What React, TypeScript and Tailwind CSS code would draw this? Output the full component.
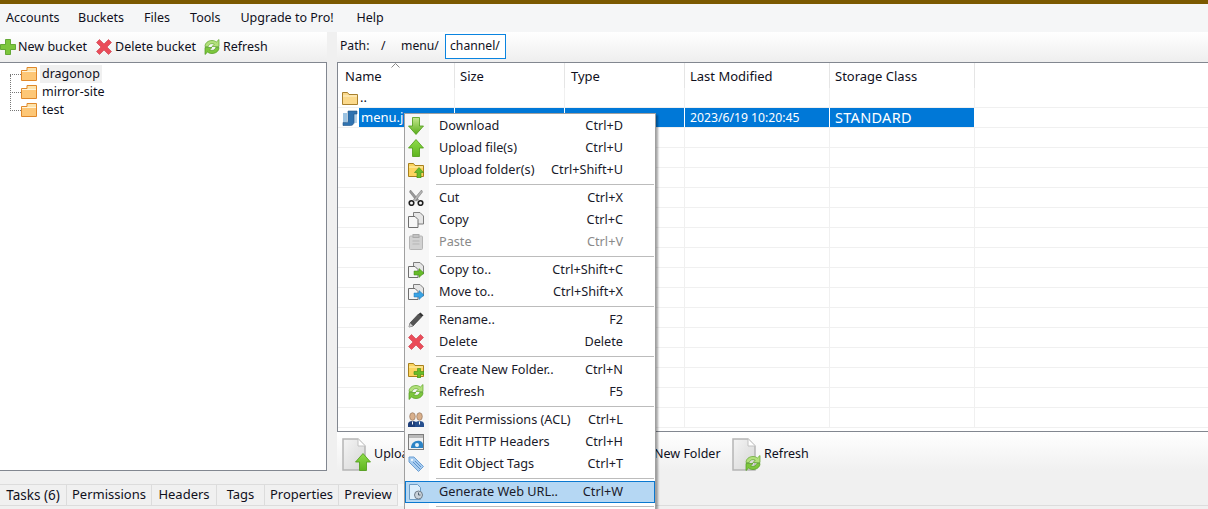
import type { ReactNode } from "react";

const MENU = [
  { label: "Accounts", w: "w-[52px]" },
  { label: "Buckets", w: "" },
  { label: "Files", w: "" },
  { label: "Tools", w: "" },
  { label: "Upgrade to Pro!", w: "w-[96px]" },
  { label: "Help", w: "" },
];
const TABS = [
  { label: "Tasks (6)", w: "w-[67px] text-[13.500px]" },
  { label: "Permissions", w: "w-[85px]" },
  { label: "Headers", w: "w-[65px]" },
  { label: "Tags", w: "w-[48px]" },
  { label: "Properties", w: "w-[74px]" },
  { label: "Preview", w: "w-[59px]" },
];

function Folder() {
  return (
    <svg width="16" height="16" viewBox="0 0 16 16" className="shrink-0">
      <path d="M.5 14.500V4.500h5.500V1.500h9.500v13z" fill="#fde3ab" stroke="#e0882a" />
      <rect x="1" y="6" width="14" height="8" fill="#fdc777" />
      <path d="M1 5.500h14" stroke="#fff3d8" />
    </svg>
  );
}

function UpFolder() {
  return (
    <svg width="16" height="16" viewBox="0 0 16 16" className="shrink-0">
      <path d="M.5 14.500V2.500h5l1.500 2h8.500v10z" fill="#fbd98b" stroke="#a8802e" />
      <path d="M1 6h14" stroke="#fff4d2" />
    </svg>
  );
}

function Arrow({ up = false }: { up?: boolean }) {
  const id = up ? "arrow-up" : "arrow-down";
  return (
    <svg width="16" height="18" viewBox="0 0 16 18" className="shrink-0">
      <defs>
        <linearGradient id={id} x1="0" y1="0" x2="0" y2="1">
          <stop offset="0" stopColor={up ? "#8fdc4a" : "#c6e88f"} />
          <stop offset="1" stopColor={up ? "#5fb51f" : "#58ad18"} />
        </linearGradient>
      </defs>
      <path
        d={up ? "M8 .5L15.500 9H11.500V17.500H4.500V9H.5z" : "M8 17.500L15.500 9H11.500V.5H4.500V9H.5z"}
        fill={`url(#${id})`}
        stroke="#4c9a14"
        strokeWidth=".8"
      />
    </svg>
  );
}

function FolderBadge({ plus = false }: { plus?: boolean }) {
  return (
    <svg width="16" height="16" viewBox="0 0 16 16" className="shrink-0">
      <path d="M.5 14.500V1.500h5l1.500 2h8.500v11z" fill="#fcd45f" stroke="#a8801d" />
      <path d="M1 5h14" stroke="#fff2b8" />
      {plus ? (
        <path d="M9.500 6.500h3v3H16v3h-3.500V16h-3v-3.500H6v-3h3.500z" fill="#67bb2a" stroke="#3f8b14" strokeWidth=".6" />
      ) : (
        <path d="M11 5.500L15.500 10.500H13V16H9V10.500H6.500z" fill="#67bb2a" stroke="#3f8b14" strokeWidth=".6" />
      )}
    </svg>
  );
}

function Scissors() {
  return (
    <svg width="16" height="16" viewBox="0 0 16 16" className="shrink-0">
      <path d="M2.500 0L10.500 9.500 8.500 11 1.500 2z" fill="#9a9a9a" stroke="#6c6c6c" strokeWidth=".5" />
      <path d="M13.500 0L5.500 9.500 7.500 11 14.500 2z" fill="#b5b5b5" stroke="#6c6c6c" strokeWidth=".5" />
      <circle cx="3.500" cy="13" r="2.300" fill="none" stroke="#1d1d1d" strokeWidth="1.600" />
      <circle cx="12.500" cy="13" r="2.300" fill="none" stroke="#1d1d1d" strokeWidth="1.600" />
    </svg>
  );
}

function Pages({ tail }: { tail?: ReactNode }) {
  return (
    <svg width="16" height="16" viewBox="0 0 16 16" className="shrink-0">
      <path d="M5.500 .5h6.500l3.500 3.500v8h-10z" fill="#e6e6e6" stroke="#7f7f7f" />
      <path d="M.5 4.500h6.500l3 3v8h-9.500z" fill="#f6f6f6" stroke="#6f6f6f" />
      {tail}
    </svg>
  );
}

function Paste() {
  return (
    <svg width="14" height="16" viewBox="0 0 14 16" className="shrink-0 ml-px">
      <rect x=".5" y="2" width="13" height="13.500" rx="1" fill="#d2d2d2" stroke="#b5b5b5" />
      <rect x="4" y=".5" width="6" height="3" fill="#c2c2c2" stroke="#aaa" />
      <path d="M3.500 7h7M3.500 10h7" stroke="#b5b5b5" />
    </svg>
  );
}

function Pencil() {
  return (
    <svg width="16" height="16" viewBox="0 0 16 16" className="shrink-0">
      <path d="M1 15l1-4 8.500-9 3 3L5 14z" fill="#555" stroke="#2e2e2e" strokeWidth=".6" />
      <path d="M1 15l1-4 3 3z" fill="#cfcfcf" />
      <path d="M10.500 2l2-1.500 3 3-2 1.500z" fill="#333" />
    </svg>
  );
}

function RedX() {
  return (
    <svg width="16" height="16" viewBox="0 0 16 16" className="shrink-0">
      <path
        d="M3.500 .5L8 5 12.500 .5 15.500 3.500 11 8l4.500 4.500-3 3L8 11l-4.500 4.500-3-3L5 8 .5 3.500z"
        fill="#ea4c59"
        stroke="#c93946"
        strokeWidth=".6"
      />
    </svg>
  );
}

function Plus() {
  return (
    <svg width="16" height="16" viewBox="0 0 16 16" className="shrink-0">
      <path d="M5.500 .5h5v5h5v5h-5v5h-5v-5h-5v-5h5z" fill="#7cc63c" stroke="#4f9a1c" strokeWidth=".8" />
    </svg>
  );
}

function Refresh() {
  const arc = "M1 7.500C1 4 4 1.500 8 1.500c1.800 0 3.200.5 4.300 1.500L15 .5V7.500H8l2.300-2.300C9.600 4.800 8.900 4.600 8 4.600c-2 0-3.300 1.200-3.700 2.900z";
  return (
    <svg width="16" height="16" viewBox="0 0 16 16" className="shrink-0">
      <path d={arc} fill="#b2e07c" stroke="#5fa52a" strokeWidth=".7" />
      <path d={arc} fill="#7cc63c" stroke="#4f9a1c" strokeWidth=".7" transform="rotate(180 8 8)" />
    </svg>
  );
}

function Users() {
  return (
    <svg width="16" height="16" viewBox="0 0 16 16" className="shrink-0">
      <ellipse cx="4.500" cy="4.500" rx="2.800" ry="3.800" fill="#d9b08c" stroke="#8a6a50" strokeWidth=".6" />
      <ellipse cx="11.500" cy="4.500" rx="2.800" ry="3.800" fill="#d9b08c" stroke="#8a6a50" strokeWidth=".6" />
      <path d="M0 15v-3c0-2 2-3 4.500-3S9 10 9 12v3z" fill="#1f3f7a" />
      <path d="M7 15v-3c0-2 2-3 4.500-3S16 10 16 12v3z" fill="#27508f" />
      <path d="M4 9.500h1v3H4zM11 9.500h1v3h-1z" fill="#fff" />
    </svg>
  );
}

function Browser() {
  return (
    <svg width="16" height="16" viewBox="0 0 16 16" className="shrink-0">
      <rect x=".5" y=".5" width="15" height="15" fill="#f0f0f0" stroke="#7d7d7d" />
      <rect x="1" y="1" width="14" height="3" fill="#b9b9b9" />
      <path d="M3 14c0-5 4-8 9-7 2 .5 3 2 3 4v3z" fill="#2c83c5" />
      <circle cx="9" cy="11" r="2" fill="#e7f2fa" />
    </svg>
  );
}

function Tag() {
  return (
    <svg width="16" height="16" viewBox="0 0 16 16" className="shrink-0">
      <path d="M1 1h5l9.500 9.500-5 5L1 6z" fill="#a9cdf0" stroke="#6d9fd2" />
      <circle cx="4" cy="4" r="1" fill="#fff" />
      <path d="M5 6l7 7M7 5l6 6" stroke="#5d91c9" />
    </svg>
  );
}

function WebUrl() {
  return (
    <svg width="16" height="16" viewBox="0 0 16 16" className="shrink-0">
      <path d="M1.500 .5h8l3 3v12h-11z" fill="#dceefb" stroke="#6d9cc4" />
      <circle cx="10.500" cy="11" r="4" fill="#c9d2da" stroke="#6f7d8a" />
      <path d="M10.500 8.500V11h2" stroke="#50606e" fill="none" />
    </svg>
  );
}

function JsFile() {
  return (
    <svg width="16" height="16" viewBox="0 0 16 16" className="shrink-0">
      <path d="M1 3h4v9H1z" fill="#9cc3e2" />
      <path d="M12 4h3v9h-3z" fill="#b4d1e8" />
      <path d="M6 1h9v3h-3v8.500c0 1.500-1.500 3-3.500 3H1v-3h3.500c1 0 1.500-.5 1.500-1.500z" fill="#2f72b0" stroke="#1f5488" strokeWidth=".6" />
    </svg>
  );
}

function BigPage({ children }: { children: ReactNode }) {
  return (
    <span className="relative block w-[29px] h-[33px] shrink-0">
      <svg width="24" height="33" viewBox="0 0 24 33" className="block">
        <defs>
          <linearGradient id="page-fill" x1="0" y1="0" x2="1" y2="1">
            <stop offset="0" stopColor="#f4f4f4" />
            <stop offset="1" stopColor="#d6d6d6" />
          </linearGradient>
        </defs>
        <path d="M1 1h15l7 7v24H1z" fill="url(#page-fill)" stroke="#b5b5b5" strokeWidth="1.500" />
        <path d="M16 1v7h7" fill="#fff" stroke="#c2c2c2" />
      </svg>
      <span className="absolute right-0 bottom-0 block">{children}</span>
    </span>
  );
}

type MenuRow = {
  label: string;
  keys: string;
  icon: ReactNode;
  disabled?: boolean;
  active?: boolean;
};

const GROUPS: MenuRow[][] = [
  [
    { label: "Download", keys: "Ctrl+D", icon: <Arrow /> },
    { label: "Upload file(s)", keys: "Ctrl+U", icon: <Arrow up /> },
    { label: "Upload folder(s)", keys: "Ctrl+Shift+U", icon: <FolderBadge /> },
  ],
  [
    { label: "Cut", keys: "Ctrl+X", icon: <Scissors /> },
    { label: "Copy", keys: "Ctrl+C", icon: <Pages /> },
    { label: "Paste", keys: "Ctrl+V", icon: <Paste />, disabled: true },
  ],
  [
    {
      label: "Copy to..",
      keys: "Ctrl+Shift+C",
      icon: <Pages tail={<path d="M6 9h5V6.500L16 11l-5 4.500V13H6z" fill="#67bb2a" stroke="#3f8b14" strokeWidth=".5" />} />,
    },
    {
      label: "Move to..",
      keys: "Ctrl+Shift+X",
      icon: <Pages tail={<path d="M6 9h5V6.500L16 11l-5 4.500V13H6z" fill="#3aa3e3" stroke="#1d76b4" strokeWidth=".5" />} />,
    },
  ],
  [
    { label: "Rename..", keys: "F2", icon: <Pencil /> },
    { label: "Delete", keys: "Delete", icon: <RedX /> },
  ],
  [
    { label: "Create New Folder..", keys: "Ctrl+N", icon: <FolderBadge plus /> },
    { label: "Refresh", keys: "F5", icon: <Refresh /> },
  ],
  [
    { label: "Edit Permissions (ACL)", keys: "Ctrl+L", icon: <Users /> },
    { label: "Edit HTTP Headers", keys: "Ctrl+H", icon: <Browser /> },
    { label: "Edit Object Tags", keys: "Ctrl+T", icon: <Tag /> },
  ],
  [{ label: "Generate Web URL..", keys: "Ctrl+W", icon: <WebUrl />, active: true }],
];

function ContextMenu() {
  return (
    <div className="absolute left-[404px] top-[113px] w-[252px] h-[400px] bg-white border border-[#a0a0a0] shadow-[2px_2px_2px_rgba(0,0,0,0.35)] text-[#1a1a2a] text-[12.700px]">
      <div className="absolute left-0 top-0 bottom-0 w-[24px] bg-[#f7f7f7]" />
      <div className="relative pt-px">
        {GROUPS.map((group, i) => (
          <div key={i}>
            {group.map((row) => (
              <div
                key={row.label}
                className={`flex items-center h-[22px] ${
                  row.active ? "bg-[#b5d7f3] border border-[#0a78d0] pl-[2px]" : "pl-[3px]"
                } ${row.disabled ? "text-[#8a8a8a]" : ""}`}
              >
                <span className="w-[31px] flex justify-start shrink-0">{row.icon}</span>
                <span className="flex-1 whitespace-nowrap">{row.label}</span>
                <span className={`whitespace-nowrap ${row.active ? "mr-[31px]" : "mr-[32px]"}`}>{row.keys}</span>
              </div>
            ))}
            <div className="h-[6px] flex items-center pl-[31px] pr-px">
              <div className="h-px w-full bg-[#bcbcbc]" />
            </div>
          </div>
        ))}
      </div>
    </div>
  );
}

function TreeRow({ label, active }: { label: string; active?: boolean }) {
  return (
    <div className="flex items-center h-[18px]">
      <span className="w-[11px] border-t border-dotted border-[#777]" />
      <Folder />
      <span className={`ml-[3px] px-[2px] leading-[18px] text-[12.500px] ${active ? "bg-[#f0f0f0]" : ""}`}>{label}</span>
    </div>
  );
}

const COLS = ["w-[117px]", "w-[110px]", "w-[120px]", "w-[145px]", "w-[145px]"];

function FileRow({ children }: { children?: ReactNode }) {
  return (
    <div className="flex h-[20px] border-b border-[#f0f0f0]">
      {COLS.map((w, i) => (
        <div key={w + i} className={`${w} h-full border-r border-[#f0f0f0] flex items-center`}>
          {i === 0 ? children : null}
        </div>
      ))}
    </div>
  );
}

export default function App() {
  return (
    <div
      className="relative h-[509px] w-[1208px] overflow-hidden bg-[#f0f0f0] text-[12.500px] text-[#10101c] flex flex-col"
      style={{ fontFamily: '"Noto Sans", "Open Sans", sans-serif' }}
    >
      <div className="h-[4px] bg-[#7b5900] shrink-0" />

      {/* Menu bar */}
      <div className="h-[28px] shrink-0 bg-[#f5f6f7] flex items-center pl-[6px] gap-[20px]">
        {MENU.map((m) => (
          <span key={m.label} className={`${m.w} whitespace-nowrap`}>
            {m.label}
          </span>
        ))}
      </div>

      {/* Panels */}
      <div className="flex h-[439px] shrink-0 gap-[10px]">
        <div className="w-[327px] flex flex-col shrink-0">
          <div className="h-[30px] shrink-0 bg-gradient-to-b from-white to-[#eeeeee] flex items-center">
            <Plus />
            <span className="ml-[2px]">New bucket</span>
            <span className="ml-[9px]"><RedX /></span>
            <span className="ml-[3px]">Delete bucket</span>
            <span className="ml-[8px]"><Refresh /></span>
            <span className="ml-[3px]">Refresh</span>
          </div>
          <div className="h-[409px] bg-white border border-l-0 border-[#828790] pt-[2px] relative">
            <div className="ml-[10px] border-l border-dotted border-[#777] absolute top-[12px] h-[36px]" />
            <div className="ml-[10px]">
              <TreeRow label="dragonop" active />
              <TreeRow label="mirror-site" />
              <TreeRow label="test" />
            </div>
          </div>
        </div>

        <div className="flex-1 flex flex-col min-w-0">
          <div className="h-[30px] shrink-0 bg-gradient-to-b from-white to-[#eeeeee] flex items-start pt-[2px] pl-[3px] text-[12.200px]">
            <span className="w-[29px] h-[25px] flex items-center">Path:</span>
            <span className="w-[16px] h-[25px] ml-[12px] flex items-center">/</span>
            <span className="w-[37px] h-[25px] ml-[4px] flex items-center">menu/</span>
            <span className="ml-[7px] h-[25px] w-[61px] pl-[4px] flex items-center border border-[#0a84e0] bg-white">channel/</span>
          </div>

          {/* File table */}
          <div className="h-[370px] shrink-0 bg-white border-y border-l border-[#828790] overflow-hidden text-[13px]">
            <div className="flex h-[25px]">
              {["Name", "Size", "Type", "Last Modified", "Storage Class"].map((h, i) => (
                <div
                  key={h}
                  className={`${COLS[i]} relative h-full border-r border-[#e5e5e5] pt-[2px] flex items-center ${
                    i === 0 ? "pl-[7px]" : i === 2 ? "pl-[6px]" : "pl-[5px]"
                  }`}
                >
                  {h}
                  {i === 0 && (
                    <svg width="9" height="5" viewBox="0 0 9 5" className="absolute left-[53px] top-0">
                      <path d="M.5 4.500l4-4 4 4" fill="none" stroke="#888" />
                    </svg>
                  )}
                </div>
              ))}
            </div>
            <FileRow>
              <span className="pl-[4px] flex items-center gap-[2px]">
                <UpFolder />
                ..
              </span>
            </FileRow>
            <div className="flex h-[20px] border-b border-[#f0f0f0]">
              <div className="w-[117px] flex items-center pl-[4px] border-r border-white">
                <JsFile />
                <span className="ml-px h-full flex-1 bg-[#0078d7] text-white pl-[2px] pt-px flex items-center">menu.js</span>
              </div>
              <div className={`${COLS[1]} bg-[#0078d7] border-r border-white`} />
              <div className={`${COLS[2]} bg-[#0078d7] border-r border-white`} />
              <div className={`${COLS[3]} bg-[#0078d7] text-white border-r border-white pl-[5px] pt-px flex items-center text-[12.200px]`}>
                2023/6/19 10:20:45
              </div>
              <div className={`${COLS[4]} bg-[#0078d7] text-white border-r border-white pl-[5px] pt-px flex items-center text-[14.500px] tracking-[0.3px]`}>
                STANDARD
              </div>
            </div>
            {Array.from({ length: 15 }, (_, i) => (
              <FileRow key={i} />
            ))}
          </div>

          {/* Bottom toolbar */}
          <div className="h-[39px] shrink-0 bg-gradient-to-b from-white to-[#f0f0f0] flex items-start pt-[6px] pl-[5px]">
            <BigPage><Arrow up /></BigPage>
            <span className="w-[280px] ml-[3px] mt-[7px]">Upload</span>
            <span className="w-[78px] mt-[7px] whitespace-nowrap">New Folder</span>
            <BigPage><Refresh /></BigPage>
            <span className="ml-[3px] mt-[7px]">Refresh</span>
          </div>
        </div>
      </div>

      {/* Tabs */}
      <div className="flex h-[22px] shrink-0 mt-[13px] relative text-[13px]">
        <div className="absolute left-0 right-0 top-0 bottom-0 border-b border-[#dcdcdc]" />
        {TABS.map((t) => (
          <div
            key={t.label}
            className={`${t.w} relative h-full flex items-center justify-center border-y border-r border-[#dcdcdc] bg-[#f0f0f0]`}
          >
            {t.label}
          </div>
        ))}
        <div className="w-[6px] relative h-full bg-[#f7f7f7]" />
      </div>

      <ContextMenu />
    </div>
  );
}
